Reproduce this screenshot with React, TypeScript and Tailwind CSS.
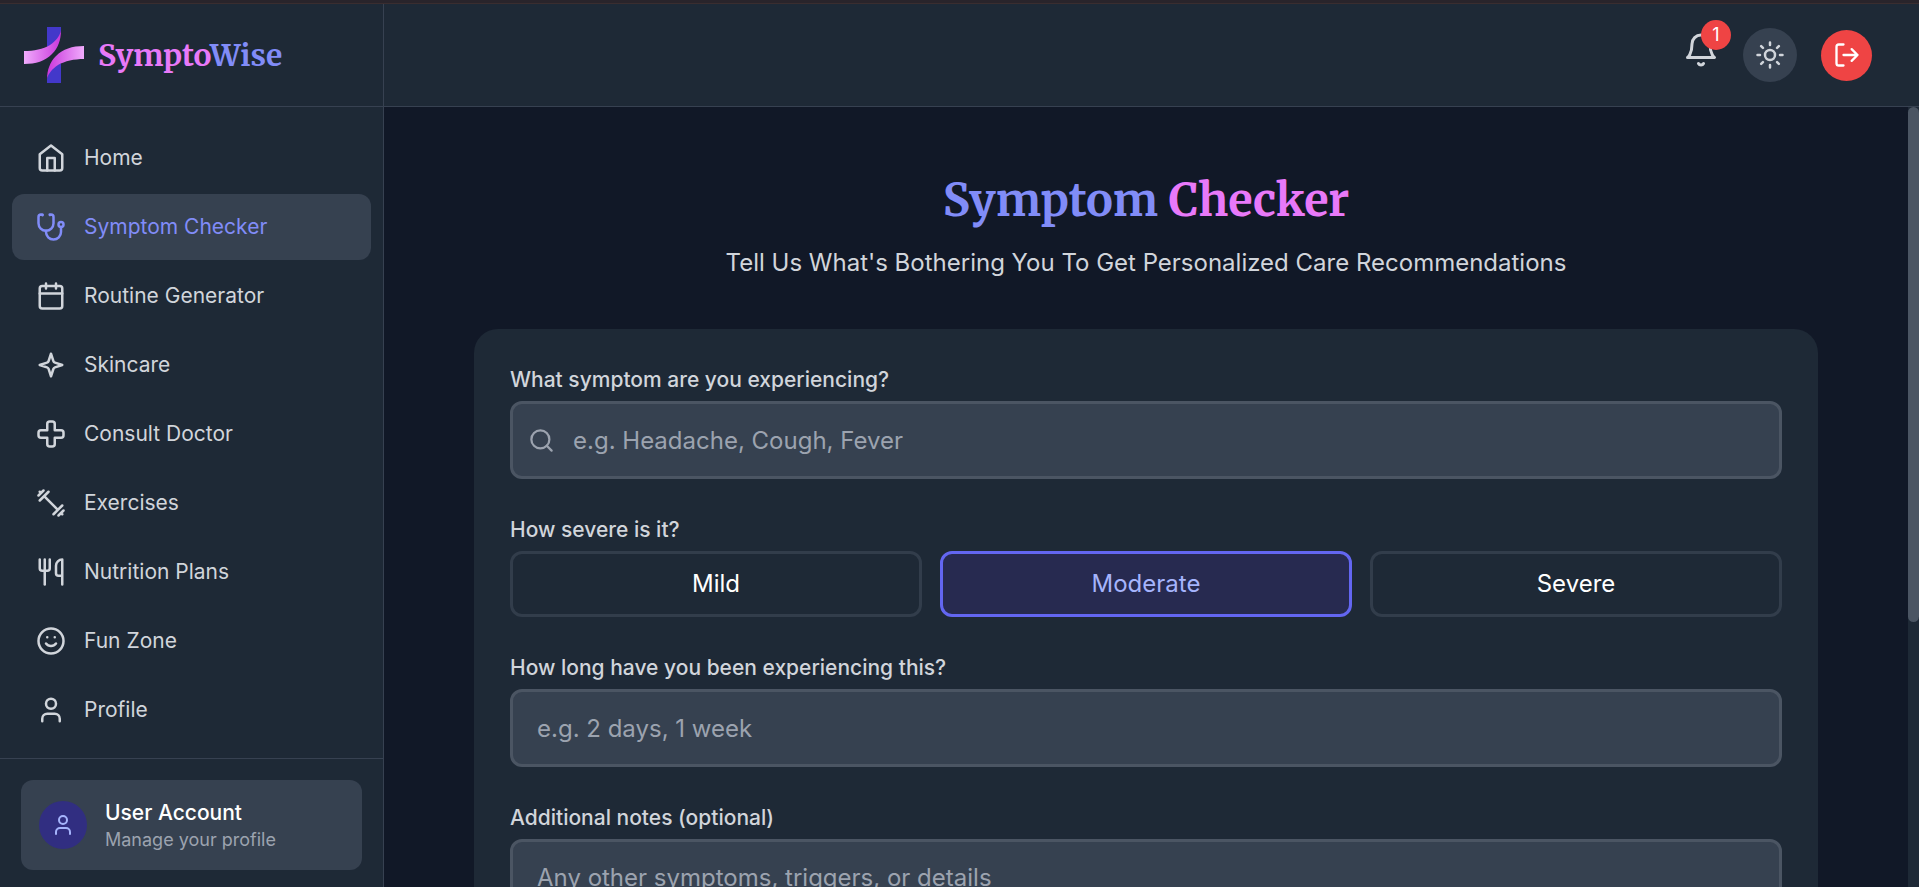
import { useState } from "react";
import type { ReactNode, UIEvent } from "react";

type IconProps = { className?: string; children: ReactNode };

function Icon({ className = "size-[30px]", children }: IconProps) {
  return (
    <svg
      viewBox="0 0 24 24"
      fill="none"
      stroke="currentColor"
      strokeWidth={2}
      strokeLinecap="round"
      strokeLinejoin="round"
      aria-hidden="true"
      className={className + " shrink-0"}
    >
      {children}
    </svg>
  );
}

const userShape = (
  <>
    <path d="M19 21v-2a4 4 0 0 0-4-4H9a4 4 0 0 0-4 4v2" />
    <circle cx="12" cy="7" r="4" />
  </>
);

const navItems = [
  {
    label: "Home",
    shape: (
      <>
        <path d="m3 9 9-7 9 7v11a2 2 0 0 1-2 2H5a2 2 0 0 1-2-2z" />
        <path d="M9 22V12h6v10" />
      </>
    ),
  },
  {
    label: "Symptom Checker",
    shape: (
      <>
        <path d="M4.8 2.3A.3.3 0 1 0 5 2H4a2 2 0 0 0-2 2v5a6 6 0 0 0 6 6 6 6 0 0 0 6-6V4a2 2 0 0 0-2-2h-1a.2.2 0 1 0 .3.3" />
        <path d="M8 15v1a6 6 0 0 0 6 6 6 6 0 0 0 6-6v-4" />
        <circle cx="20" cy="10" r="2" />
      </>
    ),
  },
  {
    label: "Routine Generator",
    shape: (
      <>
        <rect width="18" height="18" x="3" y="4" rx="2" />
        <path d="M16 2v4M8 2v4M3 10h18" />
      </>
    ),
  },
  {
    label: "Skincare",
    shape: (
      <path d="m12 3-1.9 5.8a2 2 0 0 1-1.287 1.288L3 12l5.8 1.9a2 2 0 0 1 1.288 1.287L12 21l1.9-5.8a2 2 0 0 1 1.287-1.288L21 12l-5.8-1.9a2 2 0 0 1-1.288-1.287Z" />
    ),
  },
  {
    label: "Consult Doctor",
    shape: (
      <path d="M11 2a2 2 0 0 0-2 2v5H4a2 2 0 0 0-2 2v2c0 1.1.9 2 2 2h5v5c0 1.1.9 2 2 2h2a2 2 0 0 0 2-2v-5h5a2 2 0 0 0 2-2v-2a2 2 0 0 0-2-2h-5V4a2 2 0 0 0-2-2h-2z" />
    ),
  },
  {
    label: "Exercises",
    shape: <path d="m6.5 6.5 11 11M21 21l-1-1M3 3l1 1M18 22l4-4M2 6l4-4M3 10l7-7M14 21l7-7" />,
  },
  {
    label: "Nutrition Plans",
    shape: (
      <>
        <path d="M3 2v7c0 1.1.9 2 2 2h4a2 2 0 0 0 2-2V2" />
        <path d="M7 2v20" />
        <path d="M21 15V2a5 5 0 0 0-5 5v6c0 1.1.9 2 2 2h3Zm0 0v7" />
      </>
    ),
  },
  {
    label: "Fun Zone",
    shape: (
      <>
        <circle cx="12" cy="12" r="10" />
        <path d="M8 14s1.5 2 4 2 4-2 4-2M9 9h.01M15 9h.01" />
      </>
    ),
  },
  { label: "Profile", shape: userShape },
];

function Logo() {
  return (
    <svg viewBox="0 0 60 56" className="h-14 w-[60px] shrink-0" aria-hidden="true">
      <defs>
        <linearGradient id="ribbon-left" x1="0" x2="37" y1="0" y2="0" gradientUnits="userSpaceOnUse">
          <stop offset="0" stopColor="#f0abfc" />
          <stop offset="1" stopColor="#c936dc" />
        </linearGradient>
        <linearGradient id="ribbon-right" x1="60" x2="23" y1="0" y2="0" gradientUnits="userSpaceOnUse">
          <stop offset="0" stopColor="#f0abfc" />
          <stop offset="1" stopColor="#c936dc" />
        </linearGradient>
      </defs>
      <path d="M23 0h14v4C36 12 31 17 23 20Z" fill="#4338ca" />
      <path d="M37 56H23v-4c1-8 6-13 14-16Z" fill="#4338ca" />
      <path d="M0 24C10 24 19 22 26 18C32 14 36 9 37 3C37 13 34 21 28 27C21 34 12 37 0 37Z" fill="url(#ribbon-left)" />
      <path d="M60 19C48 19 39 22 32 29C26 35 23 43 23 52C24 47 28 42 34 38C41 34 50 32 60 32Z" fill="url(#ribbon-right)" />
    </svg>
  );
}

const severities = ["Mild", "Moderate", "Severe"];

const fieldClass =
  "block w-full rounded-xl border-[3px] border-[#4b5563] bg-[#364150] text-2xl leading-9 text-white placeholder:text-[#9ca3af] focus:outline-none";
const labelClass = "mb-1.5 block text-[21px] font-medium leading-[30px] text-[#d1d5db]";

export default function App() {
  const [active, setActive] = useState("Symptom Checker");
  const [severity, setSeverity] = useState("Moderate");
  const [scroll, setScroll] = useState({ top: 0, height: 66 });

  const onScroll = (e: UIEvent<HTMLElement>) => {
    const el = e.currentTarget;
    setScroll({
      top: (el.scrollTop / el.scrollHeight) * 100,
      height: (el.clientHeight / el.scrollHeight) * 100,
    });
  };

  return (
    <div className="flex h-screen flex-col overflow-hidden bg-[#111827] font-['Inter',sans-serif]">
      <div className="h-1 shrink-0 border-b border-[#3a2d2f] bg-[#29242b]" />
      <div className="flex min-h-0 flex-1">
        <aside className="flex w-96 shrink-0 flex-col border-r border-[#374151] bg-[#1e2936]">
          <div className="flex h-[103px] shrink-0 items-center gap-3.5 border-b border-[#374151] pl-6">
            <Logo />
            <span className="font-['Merriweather',serif] text-[30px] font-bold leading-9">
              <span className="text-[#e879f9]">Sympto</span>
              <span className="text-[#818cf8]">Wise</span>
            </span>
          </div>
          <nav className="flex min-h-0 flex-1 flex-col gap-[3px] overflow-hidden px-3 pt-[18px]">
            {navItems.map((item) => (
              <a
                key={item.label}
                href="#"
                onClick={() => setActive(item.label)}
                className={
                  item.label === active
                    ? "flex items-center gap-[18px] rounded-xl bg-[#364150] px-6 py-[18px] text-[#818cf8]"
                    : "flex items-center gap-[18px] rounded-xl px-6 py-[18px] text-[#d1d5db]"
                }
              >
                <Icon>{item.shape}</Icon>
                <span className="text-[21px] leading-[30px]">{item.label}</span>
              </a>
            ))}
          </nav>
          <div className="shrink-0 border-t border-[#374151] px-[21px] pb-[17px] pt-[21px]">
            <a href="#" className="flex h-[90px] items-center gap-[18px] rounded-xl bg-[#364150] px-[18px]">
              <span className="flex size-12 shrink-0 items-center justify-center rounded-full bg-[#312e81] text-[#a5b4fc]">
                <Icon className="size-6">{userShape}</Icon>
              </span>
              <span className="flex flex-col">
                <span className="text-[21px] font-medium leading-[30px] text-white">User Account</span>
                <span className="text-lg leading-6 text-[#9ca3af]">Manage your profile</span>
              </span>
            </a>
          </div>
        </aside>

        <div className="flex min-w-0 flex-1 flex-col">
          <header className="flex h-[103px] shrink-0 items-center justify-end gap-6 border-b border-[#374151] bg-[#1e2936] pr-[47px]">
            <button type="button" aria-label="Notifications" className="relative mb-2.5 text-[#d1d5db]">
              <Icon className="size-9">
                <path d="M6 8a6 6 0 0 1 12 0c0 7 3 9 3 9H3s3-2 3-9" />
                <path d="M10.3 21a1.94 1.94 0 0 0 3.4 0" />
              </Icon>
              <span className="absolute -right-3 -top-3 flex size-[30px] items-center justify-center rounded-full bg-[#ef4444] text-lg text-white">
                1
              </span>
            </button>
            <button
              type="button"
              aria-label="Toggle theme"
              className="flex size-[54px] items-center justify-center rounded-full bg-[#364150] text-[#d1d5db]"
            >
              <Icon>
                <circle cx="12" cy="12" r="4" />
                <path d="M12 2v2M12 20v2M4.93 4.93l1.41 1.41M17.66 17.66l1.41 1.41M2 12h2M20 12h2M6.34 17.66l-1.41 1.41M19.07 4.93l-1.41 1.41" />
              </Icon>
            </button>
            <button
              type="button"
              aria-label="Log out"
              className="flex size-[51px] items-center justify-center rounded-full bg-[#ef4444] text-white"
            >
              <Icon className="size-7">
                <path d="M9 21H5a2 2 0 0 1-2-2V5a2 2 0 0 1 2-2h4M16 17l5-5-5-5M21 12H9" />
              </Icon>
            </button>
          </header>

          <div className="flex min-h-0 flex-1">
            <main onScroll={onScroll} className="min-w-0 flex-1 overflow-y-auto px-[90px] pb-12 pt-[60px] [scrollbar-width:none]">
              <div className="mx-auto max-w-[1344px]">
                <div className="mb-12 text-center">
                  <h1 className="font-['Merriweather',serif] text-[45px] font-bold leading-[66px] text-[#818cf8]">
                    Symptom <span className="text-[#e879f9]">Checker</span>
                  </h1>
                  <p className="mt-3 text-2xl leading-9 text-[#d1d5db]">
                    Tell Us What's Bothering You To Get Personalized Care Recommendations
                  </p>
                </div>
                <form onSubmit={(e) => e.preventDefault()} className="flex flex-col gap-9 rounded-3xl bg-[#1e2936] p-9">
                  <div>
                    <label htmlFor="symptom" className={labelClass}>
                      What symptom are you experiencing?
                    </label>
                    <div className="relative">
                      <span className="pointer-events-none absolute inset-y-0 left-[18px] flex items-center text-[#9ca3af]">
                        <Icon className="size-[27px]">
                          <circle cx="11" cy="11" r="8" />
                          <path d="m21 21-4.3-4.3" />
                        </Icon>
                      </span>
                      <input
                        id="symptom"
                        type="text"
                        placeholder="e.g. Headache, Cough, Fever"
                        className={fieldClass + " h-[78px] pl-[60px] pr-6"}
                      />
                    </div>
                  </div>
                  <fieldset>
                    <legend className={labelClass}>How severe is it?</legend>
                    <div className="grid grid-cols-3 gap-[18px]">
                      {severities.map((level) => (
                        <button
                          key={level}
                          type="button"
                          aria-pressed={level === severity}
                          onClick={() => setSeverity(level)}
                          className={
                            level === severity
                              ? "h-[66px] rounded-xl border-[3px] border-[#6366f1] bg-[#272a50] text-2xl leading-9 text-[#a5b4fc]"
                              : "h-[66px] rounded-xl border-[3px] border-[#323d4b] text-2xl leading-9 text-white"
                          }
                        >
                          {level}
                        </button>
                      ))}
                    </div>
                  </fieldset>
                  <div>
                    <label htmlFor="duration" className={labelClass}>
                      How long have you been experiencing this?
                    </label>
                    <input
                      id="duration"
                      type="text"
                      placeholder="e.g. 2 days, 1 week"
                      className={fieldClass + " h-[78px] px-6"}
                    />
                  </div>
                  <div>
                    <label htmlFor="notes" className={labelClass}>
                      Additional notes (optional)
                    </label>
                    <textarea
                      id="notes"
                      rows={7}
                      placeholder="Any other symptoms, triggers, or details"
                      className={fieldClass + " resize-none px-6 py-[18px]"}
                    />
                  </div>
                </form>
              </div>
            </main>
            <div className="w-[11px] shrink-0 bg-[#1e2936]" aria-hidden="true">
              <div
                className="relative w-full rounded-full bg-[#4b5563]"
                style={{ height: scroll.height + "%", top: scroll.top + "%" }}
              />
            </div>
          </div>
        </div>
      </div>
    </div>
  );
}
